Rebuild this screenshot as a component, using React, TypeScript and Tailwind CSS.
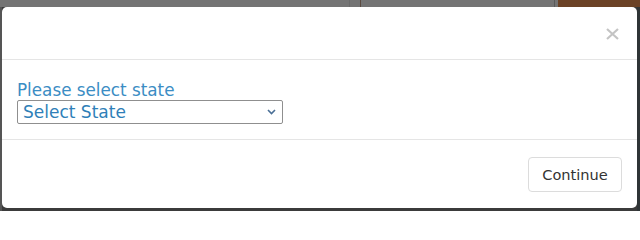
export default function App() {
  return (
    <div className="w-[640px] h-[211px] flex flex-col bg-[#3b3b3b] overflow-hidden font-['DejaVu_Sans',Verdana,sans-serif]">
      {/* dimmed page behind the modal */}
      <div className="flex h-[7px] shrink-0 bg-[#747474]">
        <div className="w-[350px] border-r border-[#6a6a6a]" />
        <div className="w-[11px] border-r border-[#5a4a40]" />
        <div className="w-[194px] border-r border-[#5a5a5a]" />
        <div className="w-[3px]" />
        <div className="flex-1 bg-[#6b4226]" />
      </div>
      <div className="flex flex-1">
        <div className="w-[2px] bg-[#555]" />
        <div className="w-[635px] h-[201px] bg-white rounded-[5px] flex flex-col">
          <div className="h-[53px] border-b border-[#e5e5e5] flex justify-end pt-[21px] pr-[18px]">
            <svg width="13" height="12" viewBox="0 0 13 12">
              <path d="M1 1l11 10M12 1L1 11" stroke="#c4c4c4" strokeWidth="2.2" />
            </svg>
          </div>
          <div className="h-[80px] border-b border-[#e5e5e5] pl-[15px] pt-[20px]">
            <div className="text-[16.8px] leading-[20px] text-[#3b8dc4]">Please select state</div>
            <div className="w-[266px] h-[24px] border border-[#8f8f8f] rounded-[2px] flex items-center justify-between pl-[5px] pr-[6px]">
              <span className="text-[17px] leading-[20px] text-[#2f7fb8]">Select State</span>
              <svg width="9" height="6" viewBox="0 0 9 6">
                <path d="M1 1l3.5 3.5L8 1" stroke="#4a6f96" strokeWidth="1.6" fill="none" />
              </svg>
            </div>
          </div>
          <div className="flex-1 flex justify-end items-start pt-[17px] pr-[15px]">
            <button className="h-[35px] w-[94px] border border-[#dcdcdc] rounded-[4px] bg-white text-[14.6px] text-[#333]">
              Continue
            </button>
          </div>
        </div>
        <div className="flex-1 bg-[#2f3436]" />
      </div>
    </div>
  )
}
